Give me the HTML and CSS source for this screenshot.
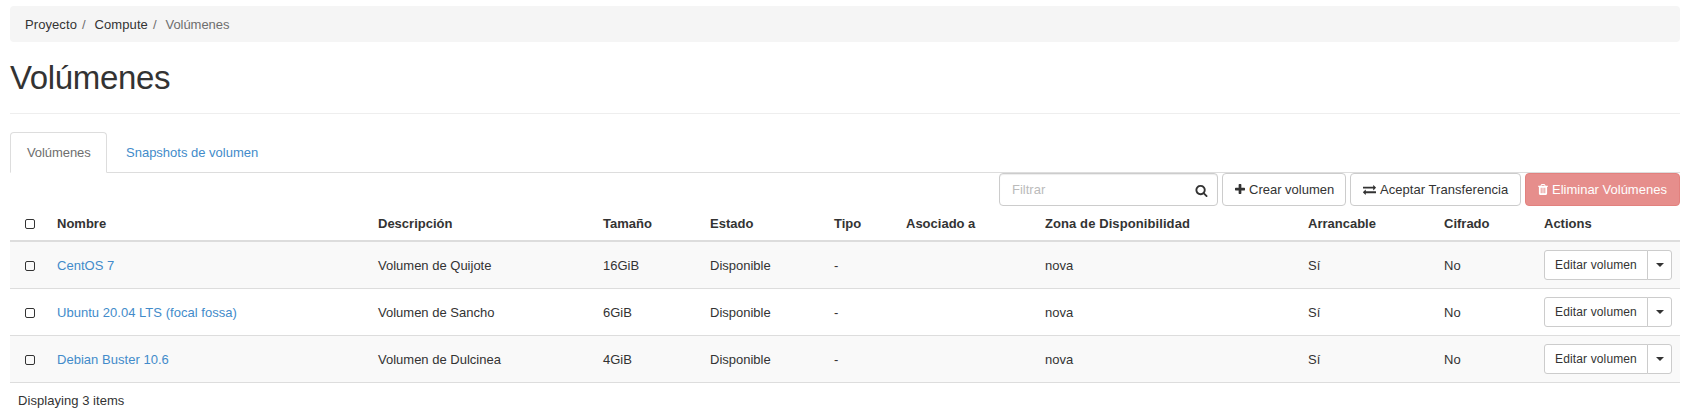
FILE: index.html
```html
<!DOCTYPE html>
<html lang="es">
<head>
<meta charset="utf-8">
<title>Volúmenes</title>
<link rel="stylesheet" href="styles.css">
</head>
<body>
<svg class="defs" aria-hidden="true">
<symbol id="search" viewBox="64 0 1664 1792"><path d="M1216 832q0-185-131.5-316.5t-316.5-131.5-316.5 131.5-131.5 316.5 131.5 316.5 316.5 131.5 316.5-131.5 131.5-316.5zm512 832q0 52-38 90t-90 38q-54 0-90-38l-343-342q-179 124-399 124-143 0-273.5-55.5t-225-150-150-225-55.5-273.5 55.5-273.5 150-225 225-150 273.5-55.5 273.5 55.5 225 150 150 225 55.5 273.5q0 220-124 399l343 343q37 37 37 90z"/></symbol>
<symbol id="plus" viewBox="192 0 1408 1792"><path d="M1600 736v192q0 40-28 68t-68 28h-416v416q0 40-28 68t-68 28h-192q-40 0-68-28t-28-68v-416h-416q-40 0-68-28t-28-68v-192q0-40 28-68t68-28h416v-416q0-40 28-68t68-28h192q40 0 68 28t28 68v416h416q40 0 68 28t28 68z"/></symbol>
<symbol id="exchange" viewBox="0 0 1792 1792"><path d="M1792 1184v192q0 13-9.5 22.5t-22.5 9.5h-1376v192q0 13-9.5 22.5t-22.5 9.5q-12 0-24-10l-319-320q-9-9-9-22 0-14 9-23l320-320q9-9 23-9 13 0 22.5 9.5t9.5 22.5v192h1376q13 0 22.5 9.5t9.5 22.5zm0-544q0 14-9 23l-320 320q-9 9-23 9-13 0-22.5-9.5t-9.5-22.5v-192h-1376q-13 0-22.5-9.5t-9.5-22.5v-192q0-13 9.5-22.5t22.5-9.5h1376v-192q0-14 9-23t23-9q12 0 24 10l319 319q9 9 9 23z"/></symbol>
<symbol id="trash" viewBox="192 0 1408 1792"><path d="M704 1376v-704q0-14-9-23t-23-9h-64q-14 0-23 9t-9 23v704q0 14 9 23t23 9h64q14 0 23-9t9-23zm256 0v-704q0-14-9-23t-23-9h-64q-14 0-23 9t-9 23v704q0 14 9 23t23 9h64q14 0 23-9t9-23zm256 0v-704q0-14-9-23t-23-9h-64q-14 0-23 9t-9 23v704q0 14 9 23t23 9h64q14 0 23-9t9-23zm-544-992h448l-48-117q-7-9-17-11h-317q-10 2-17 11zm928 32v64q0 14-9 23t-23 9h-96v948q0 83-47 143.5t-113 60.5h-832q-66 0-113-58.5t-47-141.5v-952h-96q-14 0-23-9t-9-23v-64q0-14 9-23t23-9h309l70-167q15-37 54-63t79-26h320q40 0 79 26t54 63l70 167h309q14 0 23 9t9 23z"/></symbol>
</svg>
<ol class="breadcrumb">
<li><a>Proyecto</a></li>
<li><a>Compute</a></li>
<li class="current">Volúmenes</li>
</ol>
<h1 class="page-title">Volúmenes</h1>
<ul class="tabs">
<li class="tab active">Volúmenes</li>
<li class="tab">Snapshots de volumen</li>
</ul>
<div class="toolbar">
<div class="filter"><input class="filter-input" type="text" placeholder="Filtrar"><svg class="icon search"><use href="#search"/></svg></div>
<button class="btn create"><svg class="icon narrow"><use href="#plus"/></svg>Crear volumen</button>
<button class="btn accept"><svg class="icon"><use href="#exchange"/></svg>Aceptar Transferencia</button>
<button class="btn danger"><svg class="icon narrow"><use href="#trash"/></svg>Eliminar Volúmenes</button>
</div>
<table class="volumes">
<colgroup><col class="c-check"><col class="c-name"><col class="c-desc"><col class="c-size"><col class="c-state"><col class="c-type"><col class="c-attached"><col class="c-zone"><col class="c-boot"><col class="c-enc"><col class="c-actions"></colgroup>
<thead>
<tr><th><span class="check"></span></th><th>Nombre</th><th>Descripción</th><th>Tamaño</th><th>Estado</th><th>Tipo</th><th>Asociado a</th><th class="zone">Zona de Disponibilidad</th><th>Arrancable</th><th>Cifrado</th><th>Actions</th></tr>
</thead>
<tbody>
<tr><td><span class="check"></span></td><td><a class="link">CentOS 7</a></td><td>Volumen de Quijote</td><td>16GiB</td><td>Disponible</td><td>-</td><td></td><td>nova</td><td>Sí</td><td>No</td><td class="actions"><div class="split"><button class="edit">Editar volumen</button><button class="more" aria-label="Más acciones"><span class="caret"></span></button></div></td></tr>
<tr><td><span class="check"></span></td><td><a class="link">Ubuntu 20.04 LTS (focal fossa)</a></td><td>Volumen de Sancho</td><td>6GiB</td><td>Disponible</td><td>-</td><td></td><td>nova</td><td>Sí</td><td>No</td><td class="actions"><div class="split"><button class="edit">Editar volumen</button><button class="more" aria-label="Más acciones"><span class="caret"></span></button></div></td></tr>
<tr><td><span class="check"></span></td><td><a class="link">Debian Buster 10.6</a></td><td>Volumen de Dulcinea</td><td>4GiB</td><td>Disponible</td><td>-</td><td></td><td>nova</td><td>Sí</td><td>No</td><td class="actions"><div class="split"><button class="edit">Editar volumen</button><button class="more" aria-label="Más acciones"><span class="caret"></span></button></div></td></tr>
</tbody>
</table>
<div class="count">Displaying 3 items</div>
</body>
</html>
```
FILE: styles.css
```css
* { box-sizing: border-box; }
body {
  margin: 0;
  padding: 6px 11px 0 10px;
  background: #fff;
  color: #333;
  font: 13px/18px "Liberation Sans", Arial, sans-serif;
}
button, input { font: inherit; color: inherit; }
.defs { display: none; }
.breadcrumb {
  display: flex;
  height: 36px;
  margin: 0;
  padding: 10px 15px 8px;
  list-style: none;
  background: #f5f5f5;
  border-radius: 4px;
}
.breadcrumb li + li::before { content: "/"; padding: 0 9px 0 5px; color: #6e6e6e; }
.breadcrumb a { letter-spacing: .08px; }
.breadcrumb .current { color: #6e6e6e; letter-spacing: -.04px; }
.page-title {
  height: 72px;
  margin: 0 0 18px;
  padding-top: 18px;
  border-bottom: 1px solid #eee;
  font-size: 33px;
  font-weight: 500;
  line-height: 36px;
  letter-spacing: -.36px;
}
.tabs {
  display: flex;
  gap: 2px;
  height: 41px;
  margin: 0;
  padding: 0;
  list-style: none;
  border-bottom: 1px solid #ddd;
}
.tab {
  height: 41px;
  padding: 11px 16px;
  border: 1px solid transparent;
  color: #428bca;
}
.tab.active {
  width: 97px;
  padding-right: 0;
  background: #fff;
  border-color: #ddd;
  border-bottom-color: #fff;
  border-radius: 4px 4px 0 0;
  color: #6e6e6e;
  letter-spacing: -.08px;
}
.toolbar { display: flex; justify-content: flex-end; gap: 4px; }
.filter {
  display: flex;
  align-items: center;
  width: 219px;
  height: 33px;
  padding: 0 9px 0 12px;
  border: 1px solid #ccc;
  border-radius: 4px;
  box-shadow: inset 0 1px 1px rgba(0, 0, 0, .075);
}
.filter-input {
  flex: 1;
  min-width: 0;
  padding: 0;
  border: 0;
  outline: 0;
  background: transparent;
}
.filter-input::placeholder { color: #bbb; opacity: 1; }
.icon { flex: none; width: 13px; height: 13px; fill: currentColor; }
.icon.narrow { width: 10px; }
.icon.search { margin-top: 2px; }
.btn {
  display: flex;
  align-items: center;
  justify-content: flex-start;
  gap: 4px;
  height: 33px;
  padding: 0 0 0 12px;
  border: 1px solid #ccc;
  border-radius: 4px;
  background: #fff;
  white-space: nowrap;
}
.create { width: 124px; }
.accept { width: 171px; letter-spacing: .05px; }
.danger {
  width: 155px;
  background: #d9534f;
  border-color: #d43f3a;
  color: #fff;
  opacity: .65;
}
.volumes { width: 1670px; table-layout: fixed; border-collapse: separate; border-spacing: 0; }
.c-check { width: 39px; }
.c-name { width: 321px; }
.c-desc { width: 225px; }
.c-size { width: 107px; }
.c-state { width: 124px; }
.c-type { width: 72px; }
.c-attached { width: 139px; }
.c-zone { width: 263px; }
.c-boot { width: 136px; }
.c-enc { width: 100px; }
.c-actions { width: 144px; }
.volumes th, .volumes td { padding: 2px 8px 0; text-align: left; vertical-align: middle; }
.volumes td.actions { padding-top: 0; }
.volumes th { height: 36px; border-bottom: 2px solid #ddd; }
.volumes th.zone { letter-spacing: .09px; }
.volumes td { height: 47px; border-bottom: 1px solid #ddd; }
.volumes tbody tr:nth-child(odd) { background: #f9f9f9; }
.check {
  display: block;
  width: 10px;
  height: 10px;
  margin-left: 7px;
  border: 1px solid #333;
  border-radius: 2px;
}
.link { color: #428bca; letter-spacing: .03px; }
.split { display: flex; width: 128px; height: 30px; }
.edit, .more { padding: 0; border: 1px solid #ccc; background: #fff; font-size: 12px; }
.edit { width: 104px; border-radius: 3px 0 0 3px; letter-spacing: .13px; }
.more {
  display: flex;
  align-items: center;
  justify-content: center;
  width: 25px;
  margin-left: -1px;
  border-radius: 0 3px 3px 0;
}
.caret { border-top: 4px solid #333; border-left: 4px solid transparent; border-right: 4px solid transparent; }
.count { padding: 9px 8px 8px; letter-spacing: .05px; }
```
